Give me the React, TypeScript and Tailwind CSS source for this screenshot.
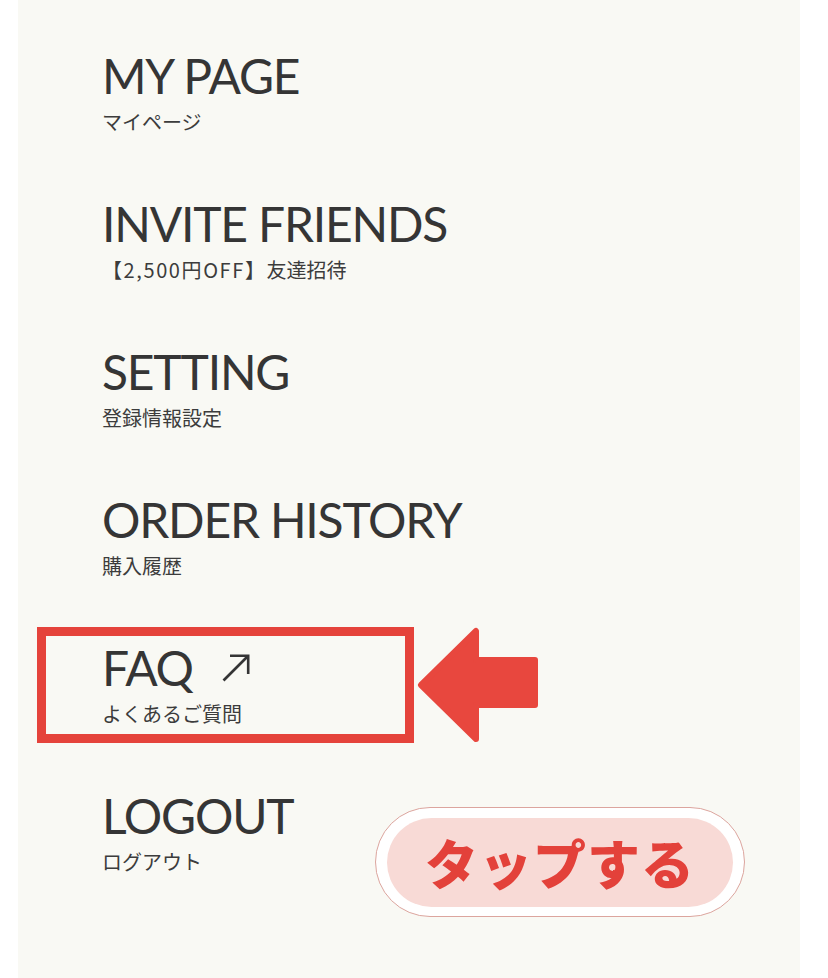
import type { ReactNode } from "react";

type Item = { title: string; sub: ReactNode; external?: boolean };

const items: Item[] = [
  { title: "MY PAGE", sub: "マイページ" },
  {
    title: "INVITE FRIENDS",
    sub: (
      <>
        <span className="tracking-[1.6px]">【2,500円OFF】</span>友達招待
      </>
    ),
  },
  { title: "SETTING", sub: "登録情報設定" },
  { title: "ORDER HISTORY", sub: "購入履歴" },
  { title: "FAQ", sub: "よくあるご質問", external: true },
  { title: "LOGOUT", sub: "ログアウト" },
];

function ExternalIcon() {
  return (
    <svg width="28" height="28" viewBox="0 0 28 28" fill="none" stroke="#353535" strokeWidth="2.6" strokeLinecap="butt">
      <path d="M1.5 26.5 L26 2" />
      <path d="M8 1.8 H26.2 V20" />
    </svg>
  );
}

export default function App() {
  return (
    <div className="min-h-[978px] w-[828px] bg-white">
      <div className="relative ml-[18px] min-h-[978px] w-[782px] bg-[#f9f9f4] pl-[84px] pt-[52px] font-['Lato','Noto_Sans_CJK_JP',sans-serif] text-[#353535]">
        <ul className="flex flex-col">
          {items.map((item) => (
            <li key={item.title} className="h-[148px]">
              <div className="flex items-center gap-[29px]">
                <span className="text-[48px] font-normal leading-[48px] tracking-[-1.2px]">{item.title}</span>
                {item.external && <ExternalIcon />}
              </div>
              <p className="mt-[10px] font-['Noto_Sans_CJK_JP',sans-serif] text-[20px] font-normal leading-[24px] text-[#3c3c3c]">
                {item.sub}
              </p>
            </li>
          ))}
        </ul>

        {/* highlight box around FAQ */}
        <div className="pointer-events-none absolute left-[19px] top-[627px] h-[116px] w-[377px] border-[9px] border-[#e5433b]" />

        {/* pointing arrow */}
        <svg className="absolute left-[397px] top-[624px]" width="126" height="122" viewBox="0 0 126 122">
          <path
            d="M6 61 L61 7 L61 36 L120 36 L120 81 L61 81 L61 115 Z"
            fill="#e8473e"
            stroke="#e8473e"
            strokeWidth="6"
            strokeLinejoin="round"
          />
        </svg>

        {/* tap label */}
        <div className="absolute left-[357px] top-[807px] flex h-[110px] w-[370px] items-center justify-center rounded-full border border-[#dca59e] bg-white">
          <div className="flex h-[89px] w-[346px] items-center justify-center rounded-full bg-[#f8dad6]">
            <span className="font-['Noto_Sans_CJK_JP',sans-serif] text-[53px] font-black leading-none tracking-[1px] text-[#e3413a]">
              タップする
            </span>
          </div>
        </div>
      </div>
    </div>
  );
}
